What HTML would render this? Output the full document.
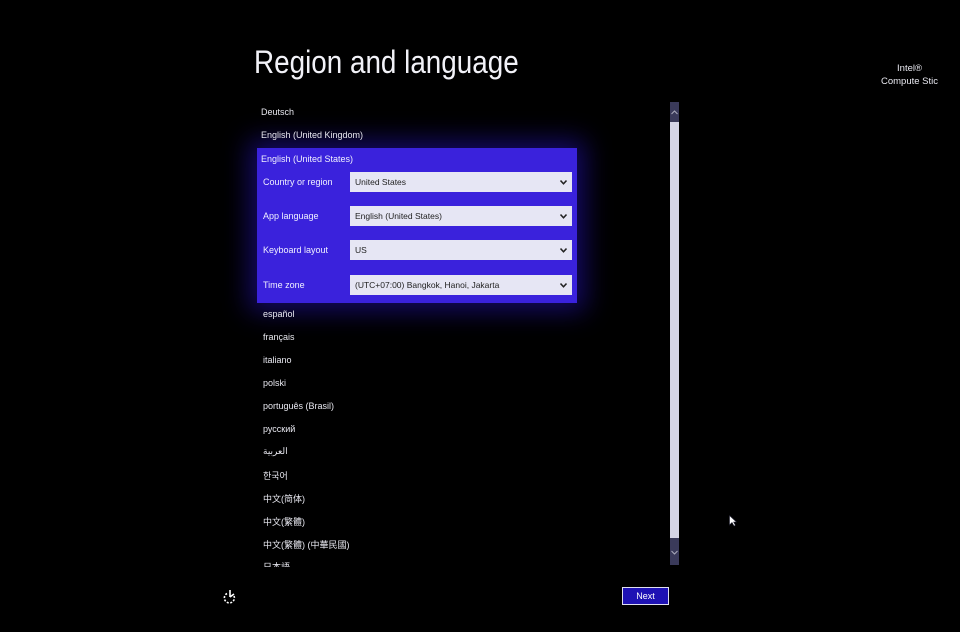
<!DOCTYPE html>
<html><head><meta charset="utf-8"><style>
html,body{margin:0;padding:0;background:#000;width:960px;height:632px;overflow:hidden;position:relative;font-family:"Liberation Sans","Noto Sans CJK SC",sans-serif;color:#fff}
.a{position:absolute;white-space:nowrap}
.t{left:254px;top:44px;font-size:32px;color:#f2f2f8;transform:scaleX(0.87);transform-origin:0 0}
.li{font-size:9px;color:#e8e8f0;left:263px}
.panel{left:257px;top:148px;width:320px;height:155px;background:#3a22dc;box-shadow:0 0 24px 8px rgba(40,20,200,.5)}
.lbl{font-size:9px;color:#f0f0ff;left:6px}
.dd{position:absolute;left:93px;width:222px;height:20px;background:#e6e6f4;color:#222;font-size:8.5px;line-height:20px;box-sizing:border-box;padding-left:5px}
.dd svg{position:absolute;right:5px;top:8px}
.sb{left:670px;top:102px;width:9px;height:463px;background:#3a3a5a}
.th{left:670px;top:122px;width:9px;height:416px;background:#d4d4e6}
.next{left:622px;top:587px;width:45px;height:16px;border:1px solid #e0e0f0;background:#1e12b4;font-size:9px;text-align:center;line-height:16px}
.intel{left:881px;top:62px;font-size:9.5px;color:#e8e8f0;text-align:center;line-height:13px}
</style></head><body>
<div class="a t">Region and language</div>
<div class="a li" style="left:261px;top:107px">Deutsch</div>
<div class="a li" style="left:261px;top:130px;z-index:2">English (United Kingdom)</div>
<div class="a panel">
 <div class="a lbl" style="left:4px;top:6px">English (United States)</div>
 <div class="a lbl" style="top:29px">Country or region</div>
 <div class="dd" style="top:24px">United States<svg width="7" height="5"><path d="M0.5 0.5L3.5 3.8L6.5 0.5" stroke="#222" stroke-width="1.5" fill="none"/></svg></div>
 <div class="a lbl" style="top:63px">App language</div>
 <div class="dd" style="top:58px">English (United States)<svg width="7" height="5"><path d="M0.5 0.5L3.5 3.8L6.5 0.5" stroke="#222" stroke-width="1.5" fill="none"/></svg></div>
 <div class="a lbl" style="top:97px">Keyboard layout</div>
 <div class="dd" style="top:92px">US<svg width="7" height="5"><path d="M0.5 0.5L3.5 3.8L6.5 0.5" stroke="#222" stroke-width="1.5" fill="none"/></svg></div>
 <div class="a lbl" style="top:132px">Time zone</div>
 <div class="dd" style="top:127px">(UTC+07:00) Bangkok, Hanoi, Jakarta<svg width="7" height="5"><path d="M0.5 0.5L3.5 3.8L6.5 0.5" stroke="#222" stroke-width="1.5" fill="none"/></svg></div>
</div>
<div class="a" style="left:0;top:0;width:960px;height:567px;overflow:hidden">
<div class="a li" style="top:309px">español</div>
<div class="a li" style="top:332px">français</div>
<div class="a li" style="top:355px">italiano</div>
<div class="a li" style="top:378px">polski</div>
<div class="a li" style="top:401px">português (Brasil)</div>
<div class="a li" style="top:424px">русский</div>
<div class="a li" style="top:446px">العربية</div>
<div class="a li" style="top:469px">한국어</div>
<div class="a li" style="top:492px">中文(简体)</div>
<div class="a li" style="top:515px">中文(繁體)</div>
<div class="a li" style="top:538px">中文(繁體) (中華民國)</div>
<div class="a li" style="top:560px">日本語</div>
</div>
<div class="a sb"></div>
<div class="a th"></div>
<svg class="a" style="left:671px;top:110px" width="7" height="5"><path d="M0.5 4L3.5 1L6.5 4" stroke="#aab" stroke-width="1" fill="none"/></svg>
<svg class="a" style="left:671px;top:550px" width="7" height="5"><path d="M0.5 1L3.5 4L6.5 1" stroke="#aab" stroke-width="1" fill="none"/></svg>
<div class="a intel">Intel®<br>Compute Stic</div>
<div class="a next">Next</div>
<svg class="a" style="left:222px;top:588px" width="16" height="16"><path d="M5 5.5A5 5 0 1 0 12 8" stroke="#fff" stroke-width="1.6" fill="none" stroke-dasharray="2 1.5"/><path d="M8 2V9M8 9L12 6" stroke="#fff" stroke-width="1.6" fill="none"/></svg>
<svg class="a" style="left:729px;top:515px" width="8" height="12"><path d="M0.5 0.5V10L3 7.5L5 11L6.5 10.3L4.6 7H7.5Z" fill="#fff" stroke="#223" stroke-width=".6"/></svg>
</body></html>
